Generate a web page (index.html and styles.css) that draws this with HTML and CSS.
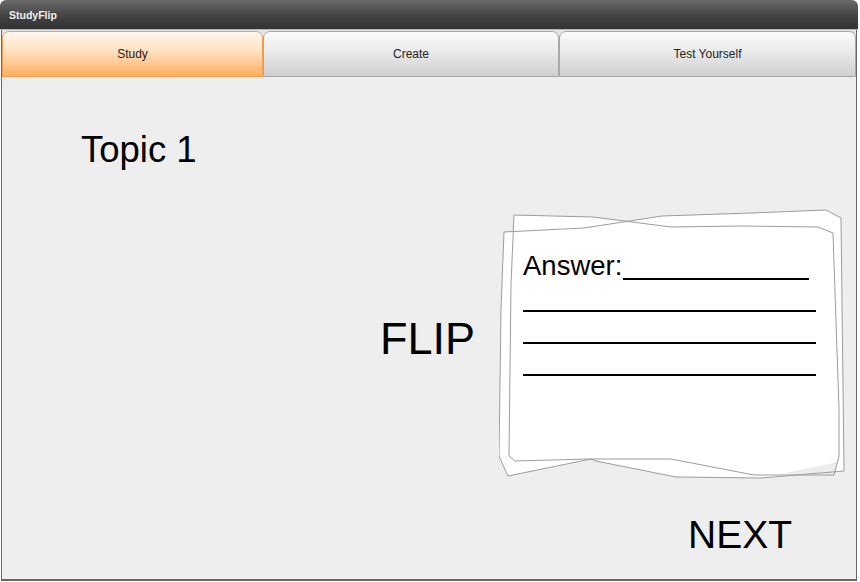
FILE: index.html
```html
<!DOCTYPE html>
<html>
<head>
<meta charset="utf-8">
<link rel="stylesheet" href="styles.css">
</head>
<body>
<div class="window">
  <div class="titlebar">StudyFlip</div>
  <div class="tabbar">
    <div class="tab tab-study active">Study</div>
    <div class="tab tab-create">Create</div>
    <div class="tab tab-test">Test Yourself</div>
  </div>
  <div class="content">
    <div class="topic">Topic 1</div>
    <div class="middle">
      <div class="flip">FLIP</div>
      <div class="card">
        <svg class="card-shape" width="346" height="272" viewBox="0 0 346 272">
          <polygon class="fill" points="5,23 85,19 163,7 252,4 327,1 342,9 345,262 262,269 177,268 97,252 92,250 9,267 0,247 2,100"/>
          <polygon class="fill" points="15,6 94,8 172,18 242,17 319,18 334,24 340,200 340,247 335,266 255,266 172,250 89,250 16,252 10,247 12,75"/>
          <polygon class="shade" points="282,265 339,253 335,266"/>
          <polygon class="edge" points="5,23 85,19 163,7 252,4 327,1 342,9 345,262 262,269 177,268 97,252 92,250 9,267 0,247 2,100"/>
          <polygon class="edge" points="15,6 94,8 172,18 242,17 319,18 334,24 340,200 340,247 335,266 255,266 172,250 89,250 16,252 10,247 12,75"/>
        </svg>
        <div class="card-body">
          <div class="answer-row">
            <span class="answer-label">Answer:</span>
            <span class="answer-fill"></span>
          </div>
          <div class="rule"></div>
          <div class="rule"></div>
          <div class="rule"></div>
        </div>
      </div>
    </div>
    <div class="next">NEXT</div>
  </div>
</div>
</body>
</html>
```

FILE: styles.css
```css
html, body {
  margin: 0;
  padding: 0;
  background: #ffffff;
}

body {
  font-family: "Liberation Sans", Arial, sans-serif;
  color: #000;
}

.window {
  width: 858px;
  height: 581px;
  display: flex;
  flex-direction: column;
}

.titlebar {
  height: 29px;
  border-radius: 6px 6px 0 0;
  background: linear-gradient(#6a6a6a, #404040 60%, #333333);
  color: #f2f2f2;
  font-weight: bold;
  font-size: 10.5px;
  line-height: 30px;
  padding-left: 9px;
  border-bottom: 1px solid #b8b8b8;
}

.tabbar {
  height: 46px;
  display: flex;
  padding: 1px 0 0 0;
  background: #e4e4e4;
  border-left: 1px solid #666;
  border-right: 1px solid #666;
  margin: 0 1px 0 1px;
}

.tab {
  box-sizing: border-box;
  height: 46px;
  border: 1px solid #a8a8a8;
  border-radius: 7px 7px 0 0;
  background: linear-gradient(#fbfbfb, #ececec 40%, #d0d0d0);
  font-size: 12px;
  color: #222;
  display: flex;
  align-items: center;
  justify-content: center;
  padding-bottom: 1px;
}

.tab-study { width: 261px; }
.tab-create { width: 296px; }
.tab-test { width: 297px; }

.tab.active {
  border-color: #f3a14e;
  background: linear-gradient(#fff7ee, #ffe0bf 45%, #ffae5c);
}

.content {
  flex: 1;
  margin: 0 1px;
  background: #eeeeee;
  border: 1px solid #666;
  border-top: 0;
  border-bottom-width: 2px;
  padding-left: 1px;
  display: flex;
  flex-direction: column;
}

.topic {
  font-size: 36.5px;
  line-height: 36px;
  margin: 55px 0 0 78px;
}

.middle {
  display: flex;
  margin-top: 41px;
}

.flip {
  font-size: 45px;
  line-height: 45px;
  margin: 107px 0 0 377px;
  width: 119px;
}

.card {
  position: relative;
  width: 346px;
  height: 272px;
}

.card-shape {
  position: absolute;
  left: 0;
  top: 0;
}

.card-shape .fill {
  fill: #ffffff;
  stroke: none;
}

.card-shape .shade {
  fill: #ececec;
  stroke: none;
}

.card-shape .edge {
  fill: none;
  stroke: #9c9c9c;
  stroke-width: 1;
}

.card-body {
  position: relative;
  padding: 43px 0 0 24px;
}

.answer-row {
  display: flex;
  align-items: flex-end;
  height: 28px;
}

.answer-label {
  font-size: 27.5px;
  line-height: 27px;
  margin-bottom: 1px;
}

.answer-fill {
  width: 186px;
  margin-left: 1px;
  border-bottom: 2px solid #000;
}

.rule {
  width: 293px;
  height: 30px;
  border-bottom: 2px solid #000;
}

.next {
  font-size: 39px;
  line-height: 39px;
  margin: 34px 0 0 685px;
}
```
